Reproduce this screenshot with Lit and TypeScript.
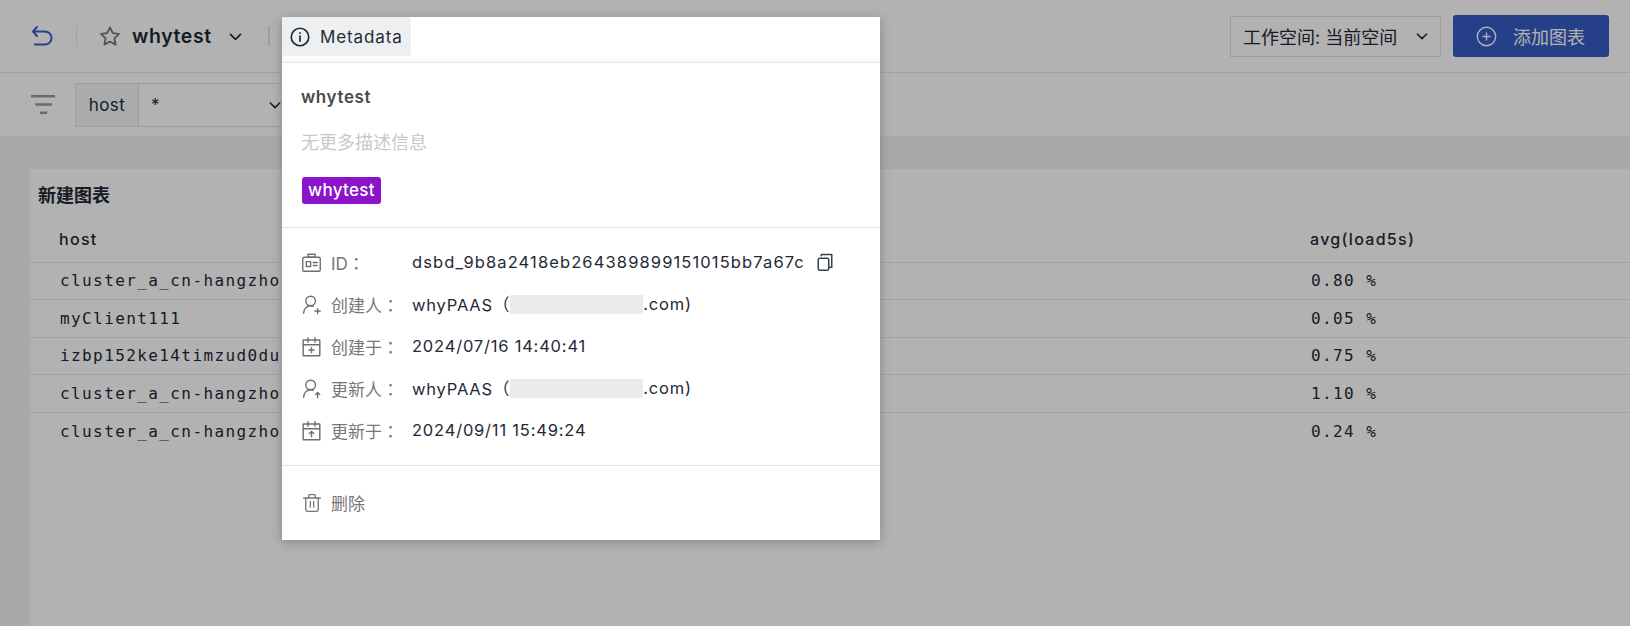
import { LitElement, html, css, svg } from "lit"
import { customElement } from "lit/decorators.js"

const rows = [
  ["cluster_a_cn-hangzhou", "0.80 %"],
  ["myClient111", "0.05 %"],
  ["izbp152ke14timzud0du", "0.75 %"],
  ["cluster_a_cn-hangzhou", "1.10 %"],
  ["cluster_a_cn-hangzhou", "0.24 %"],
]

const icon = (size: number, body: unknown, width = 1.6) => html`<svg
  width=${size} height=${size} viewBox="0 0 24 24" fill="none"
  stroke="currentColor" stroke-width=${width} stroke-linecap="round" stroke-linejoin="round">${body}</svg>`

const chevron = svg`<path d="M4 8.500l8 8 8-8" />`
const idCard = svg`<path d="M3.500 6h17a1.500 1.500 0 0 1 1.500 1.500v13a1.500 1.500 0 0 1-1.500 1.500h-17A1.500 1.500 0 0 1 2 20.500v-13A1.500 1.500 0 0 1 3.500 6z" /><rect x="8" y="2.500" width="8" height="3.500" /><rect x="6" y="11" width="5" height="5.500" /><path d="M14 12h4.500M14 15.500h4.500" />`
const personAdd = svg`<circle cx="11" cy="8" r="5.500" /><path d="M3 22c0-5 3.500-8.500 8-8.500 1 0 2 .2 3 .5" /><path d="M19 16.500v6M16 19.500h6" />`
const personUp = svg`<circle cx="11" cy="8" r="5.500" /><path d="M3 22c0-5 3.500-8.500 8-8.500 1 0 2 .2 3 .5" /><path d="M19 22.500v-6M16.500 19l2.500-2.500 2.500 2.500" />`
const calAdd = svg`<rect x="2.500" y="4.500" width="19" height="18" /><path d="M2.500 10h19M8 2v5M16 2v5M12 13v6M9 16h6" />`
const calUp = svg`<rect x="2.500" y="4.500" width="19" height="18" /><path d="M2.500 10h19M8 2v5M16 2v5M12 19v-6M9.500 15.500L12 13l2.500 2.500" />`

const meta = [
  { icon: idCard, label: "ID", value: "dsbd_9b8a2418eb264389899151015bb7a67c", copy: true },
  { icon: personAdd, label: "创建人", value: "whyPAAS（", mail: true },
  { icon: calAdd, label: "创建于", value: "2024/07/16 14:40:41" },
  { icon: personUp, label: "更新人", value: "whyPAAS（", mail: true },
  { icon: calUp, label: "更新于", value: "2024/09/11 15:49:24" },
]

@customElement("app-root")
export class AppRoot extends LitElement {
  static styles = css`
    :host {
      display: block;
      position: relative;
      height: 626px;
      overflow: hidden;
      background: #fff;
      color: #1f2937;
      font-family: Inter, "Noto Sans CJK SC", sans-serif;
    }
    svg { display: block; flex: none; }

    .header {
      height: 72px;
      border-bottom: 1px solid #e5e7eb;
      display: flex;
      align-items: center;
      padding: 0 21px 0 30px;
    }
    .back { color: #365bc5; }
    .sep { width: 1px; height: 20px; background: #e5e7eb; }
    .sep.first { margin: 0 22px 0 22px; }
    .sep.second { margin-left: 25px; width: 2px; background: #dfe2e6; }
    .star { color: #777; }
    .name { font-size: 19.500px; font-weight: 600; letter-spacing: 0.6px; margin: 0 16px 0 11px; }
    .spacer { flex: 1; }
    .space {
      width: 211px;
      height: 41px;
      box-sizing: border-box;
      border: 1px solid #dfe2e7;
      display: flex;
      align-items: center;
      justify-content: space-between;
      padding: 0 11px 0 12px;
      font-size: 18px;
    }
    .add {
      width: 156px;
      height: 42px;
      margin-left: 12px;
      background: #365bc5;
      color: #fff;
      border-radius: 3px;
      display: flex;
      align-items: center;
      padding-left: 23px;
      gap: 16px;
      box-sizing: border-box;
      font-size: 18px;
    }

    .filters {
      height: 63px;
      display: flex;
      align-items: center;
      padding-left: 30px;
      gap: 20px;
      color: #999;
    }
    .group {
      display: flex;
      height: 44px;
      width: 220px;
      box-sizing: border-box;
      border: 1px solid #e0e3e7;
      font-size: 17px;
      letter-spacing: 0.4px;
      color: #1f2937;
    }
    .group .key {
      width: 62px;
      background: #f3f5f7;
      border-right: 1px solid #e0e3e7;
      display: flex;
      align-items: center;
      justify-content: center;
    }
    .group .val {
      flex: 1;
      padding: 8px 12px;
      display: flex;
      justify-content: space-between;
      align-items: center;
    }

    .content {
      background: #f2f3f5;
      padding: 33px 0 0 30px;
      height: 490px;
      box-sizing: border-box;
    }
    .panel { background: #fff; height: 100%; }
    .panel h2 {
      margin: 0;
      padding: 13px 0 0 8px;
      font-size: 18px;
      font-weight: 600;
      line-height: 27px;
    }
    .row {
      display: grid;
      grid-template-columns: 1251px 1fr;
      height: 37.500px;
      align-items: center;
      border-bottom: 1px solid #e8e9ec;
      box-sizing: border-box;
      font-family: "DejaVu Sans Mono", monospace;
      font-size: 16px;
      letter-spacing: 1.400px;
    }
    .row:last-child { border-bottom: none; }
    .row span { padding-left: 30px; white-space: nowrap; overflow: hidden; }
    .row.head {
      height: 53.500px;
      padding-top: 7px;
      font-family: Inter, sans-serif;
      font-weight: 500;
      letter-spacing: 1.300px;
    }
    .row.head span { padding-left: 29px; }

    .mask { position: absolute; inset: 0; background: rgba(0, 0, 0, 0.3); }

    .pop {
      position: absolute;
      left: 282px;
      top: 17px;
      width: 598px;
      height: 523px;
      background: #fff;
      box-shadow: 0 2px 10px rgba(0, 0, 0, 0.25);
    }
    .bar {
      height: 46px;
      box-sizing: border-box;
      border-bottom: 1px solid #e8e8e8;
      background: linear-gradient(#fff 39px, #f6f6f6);
    }
    .tab {
      width: 129px;
      height: 39px;
      background: #eeeff1;
      border-radius: 0 3px 3px 3px;
      display: flex;
      align-items: center;
      gap: 10px;
      padding-left: 8px;
      box-sizing: border-box;
      font-size: 17px;
      letter-spacing: 0.900px;
    }
    .about { padding: 21px 19px 0; height: 165px; box-sizing: border-box; border-bottom: 1px solid #e5e5e5; }
    .title { font-size: 17px; font-weight: 600; letter-spacing: 0.6px; color: #4b4b4b; line-height: 26px; }
    .desc { font-size: 18px; color: #c8c8c8; line-height: 26px; margin-top: 20px; }
    .tag {
      display: inline-block;
      margin: 21px 0 0 1px;
      height: 27px;
      line-height: 27px;
      padding: 0 6px;
      background: #8b13c9;
      color: #fff;
      border-radius: 3px;
      font-size: 17px;
      font-weight: 500;
      letter-spacing: 0.3px;
    }
    .info { padding: 13px 19px 0; height: 238px; box-sizing: border-box; border-bottom: 1px solid #e5e5e5; }
    .item { display: flex; align-items: center; height: 42px; font-size: 17px; }
    .item .ico { width: 30px; color: #6f6f6f; }
    .item .label { width: 81px; color: #777; }
    /* the colon sits centred in its cell in the reference, as the TC face draws it */
    .item .colon { font-family: "Noto Sans CJK TC", sans-serif; }
    .item .value { white-space: nowrap; font-size: 16.500px; letter-spacing: 0.800px; }
    .item .value.id { letter-spacing: 1.120px; }
    .redact { width: 133px; height: 19px; background: #ebebeb; }
    .copy { margin-left: 11px; color: #374151; }
    .del { display: flex; align-items: center; gap: 9px; padding: 24px 20px; color: #777; font-size: 17px; }
  `

  render() {
    return html`
      <div class="header">
        <span class="back">${icon(24, svg`<path d="M7 3L3 7.500l4 4.500M3 7.500h12a6.500 6.500 0 0 1 0 13H5" />`, 2)}</span>
        <span class="sep first"></span>
        <span class="star">${icon(22, svg`<path d="M12 2.500l3 6.300 6.800.9-5 4.800 1.300 6.900-6.100-3.400-6.100 3.400 1.300-6.900-5-4.800 6.800-.9z" />`, 2)}</span>
        <span class="name">whytest</span>
        ${icon(15, chevron, 2.6)}
        <span class="sep second"></span>
        <span class="spacer"></span>
        <div class="space">工作空间: 当前空间 ${icon(14, chevron, 2.6)}</div>
        <div class="add">
          ${icon(21, svg`<circle cx="12" cy="12" r="10.500" /><path d="M12 8v8M8 12h8" />`)}
          <span>添加图表</span>
        </div>
      </div>
      <div class="filters">
        ${icon(25, svg`<path d="M1 4h23M5 12h16M9.500 20h7" stroke-linecap="butt" />`, 2.4)}
        <div class="group">
          <div class="key">host</div>
          <div class="val"><span>*</span>${icon(14, chevron, 2.6)}</div>
        </div>
      </div>
      <div class="content">
        <div class="panel">
          <h2>新建图表</h2>
          <div class="row head"><span>host</span><span>avg(load5s)</span></div>
          ${rows.map(([host, avg]) => html`<div class="row"><span>${host}</span><span>${avg}</span></div>`)}
        </div>
      </div>
      <div class="mask"></div>
      <div class="pop">
        <div class="bar">
          <div class="tab">
            ${icon(20, svg`<circle cx="12" cy="12" r="10.500" /><path d="M12 11v6" /><path d="M12 7v.5" />`, 2)}
            Metadata
          </div>
        </div>
        <div class="about">
          <div class="title">whytest</div>
          <div class="desc">无更多描述信息</div>
          <span class="tag">whytest</span>
        </div>
        <div class="info">
          ${meta.map(
            (m) => html`
              <div class="item">
                <span class="ico">${icon(21, m.icon)}</span>
                <span class="label">${m.label}<span class="colon">：</span></span>
                <span class="value ${m.copy ? "id" : ""}">${m.value}</span>
                ${m.mail ? html`<span class="redact"></span><span class="value">.com)</span>` : ""}
                ${m.copy
                  ? html`<span class="copy">${icon(18, svg`<rect x="3" y="7" width="14" height="16" rx="2" /><path d="M7 3.500V2h14v17h-3.500" />`, 2)}</span>`
                  : ""}
              </div>
            `,
          )}
        </div>
        <div class="del">
          ${icon(20, svg`<path d="M2 6h20M8 6V3a1 1 0 0 1 1-1h6a1 1 0 0 1 1 1v3M4.500 6v14a2 2 0 0 0 2 2h11a2 2 0 0 0 2-2V6M10 10v7M14 10v7" />`)}
          <span>删除</span>
        </div>
      </div>
    `
  }
}
